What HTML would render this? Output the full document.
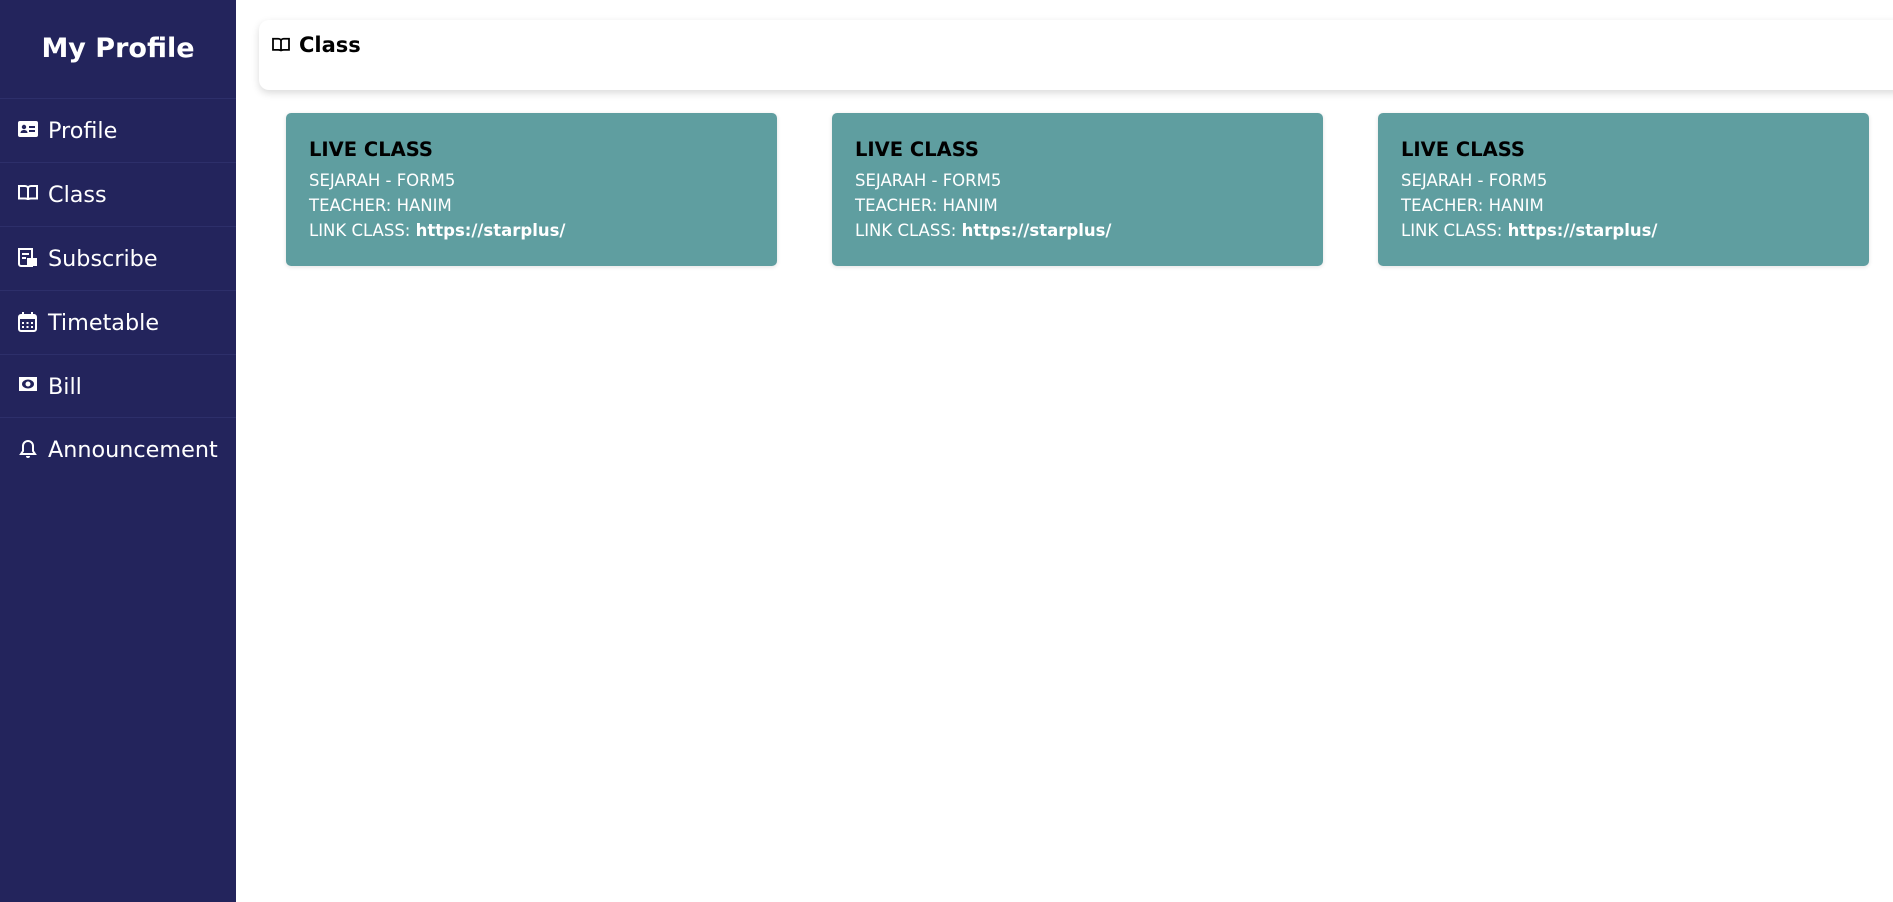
<!DOCTYPE html>
<html><head><meta charset="utf-8"><style>
*{margin:0;padding:0;box-sizing:border-box}
body{width:1893px;height:902px;overflow:hidden;background:#fff;font-family:"DejaVu Sans","Liberation Sans",sans-serif;position:relative}
.side{position:absolute;left:0;top:0;width:236px;height:902px;background:#23245c}
.side h1{position:absolute;top:30px;left:0;width:236px;text-align:center;color:#fff;font-size:27px;font-weight:bold;line-height:38px}
.item{position:absolute;left:0;width:236px;height:64px;border-top:1px solid #2d2f6a;color:#fff;font-size:22.3px;line-height:64px;padding-left:48px}
.item svg{position:absolute;left:18px;top:21px}
.hdr{position:absolute;left:259px;top:20px;width:1660px;height:70px;background:#fff;border-radius:10px;box-shadow:0 3px 8px rgba(0,0,0,.15)}
.hdr span{position:absolute;left:40px;top:13px;font-size:21px;font-weight:bold;color:#000}
.hdr svg{position:absolute;left:13px;top:17px}
.card{position:absolute;top:113px;width:491px;height:153px;background:#5f9ea0;border-radius:5px;box-shadow:0 1px 4px rgba(0,0,0,.12);padding:23px 0 0 23px;color:#fff;font-size:16.5px;line-height:25px}
.card h2{font-size:19.5px;color:#000;font-weight:bold;line-height:28px;margin-bottom:4px}
</style></head><body>
<div class="side">
<h1>My Profile</h1>
<div class="item" style="top:98px"><svg width="20" height="18" viewBox="0 0 20 18"><rect x="0" y="1" width="20" height="16" rx="2" fill="#fff"/><circle cx="6" cy="7" r="2.2" fill="#23245c"/><path d="M2.5 13c0-2 1.5-3 3.5-3s3.5 1 3.5 3z" fill="#23245c"/><rect x="11" y="6" width="6" height="2" fill="#23245c"/><rect x="11" y="10" width="6" height="2" fill="#23245c"/></svg>Profile</div>
<div class="item" style="top:162px"><svg width="20" height="18" viewBox="0 0 20 18"><path d="M1 2h6c1.5 0 3 1 3 2.5V16c0-1-1.5-1.5-3-1.5H1z M19 2h-6c-1.5 0-3 1-3 2.5V16c0-1 1.5-1.5 3-1.5h6z" fill="none" stroke="#fff" stroke-width="2"/></svg>Class</div>
<div class="item" style="top:226px"><svg width="20" height="20" viewBox="0 0 20 20"><path d="M1 1h13v17H3a2 2 0 0 1-2-2z" fill="none" stroke="#fff" stroke-width="2"/><rect x="4" y="5" width="7" height="2" fill="#fff"/><rect x="4" y="9" width="4" height="2" fill="#fff"/><rect x="9" y="10" width="10" height="8" fill="#fff"/></svg>Subscribe</div>
<div class="item" style="top:290px"><svg width="19" height="20" viewBox="0 0 19 20"><rect x="1" y="3" width="17" height="16" rx="2" fill="none" stroke="#fff" stroke-width="2"/><rect x="1" y="3" width="17" height="4" fill="#fff"/><rect x="4" y="0" width="2" height="4" fill="#fff"/><rect x="13" y="0" width="2" height="4" fill="#fff"/><g fill="#fff"><rect x="4" y="10" width="2" height="2"/><rect x="8.5" y="10" width="2" height="2"/><rect x="13" y="10" width="2" height="2"/><rect x="4" y="14" width="2" height="2"/><rect x="8.5" y="14" width="2" height="2"/><rect x="13" y="14" width="2" height="2"/></g></svg>Timetable</div>
<div class="item" style="top:354px"><svg width="20" height="16" viewBox="0 0 20 16"><rect x="1" y="1" width="18" height="14" fill="#fff"/><ellipse cx="10" cy="8" rx="6" ry="4.5" fill="#23245c"/><circle cx="10" cy="8" r="2.5" fill="#fff"/></svg>Bill</div>
<div class="item" style="top:417px"><svg width="20" height="20" viewBox="0 0 20 20"><path d="M10 2a5 5 0 0 0-5 5v5l-2 3h14l-2-3V7a5 5 0 0 0-5-5z" fill="none" stroke="#fff" stroke-width="2"/><path d="M8 17a2 2 0 0 0 4 0" fill="#fff"/></svg>Announcement</div>
</div>
<div class="hdr"><svg width="18" height="16" viewBox="0 0 20 18"><path d="M1 2h6c1.5 0 3 1 3 2.5V16c0-1-1.5-1.5-3-1.5H1z M19 2h-6c-1.5 0-3 1-3 2.5V16c0-1 1.5-1.5 3-1.5h6z" fill="none" stroke="#000" stroke-width="2"/></svg><span>Class</span></div>
<div class="card" style="left:286px"><h2>LIVE CLASS</h2>SEJARAH - FORM5<br>TEACHER: HANIM<br>LINK CLASS: <b>https://starplus/</b></div>
<div class="card" style="left:832px"><h2>LIVE CLASS</h2>SEJARAH - FORM5<br>TEACHER: HANIM<br>LINK CLASS: <b>https://starplus/</b></div>
<div class="card" style="left:1378px"><h2>LIVE CLASS</h2>SEJARAH - FORM5<br>TEACHER: HANIM<br>LINK CLASS: <b>https://starplus/</b></div>
</body></html>
